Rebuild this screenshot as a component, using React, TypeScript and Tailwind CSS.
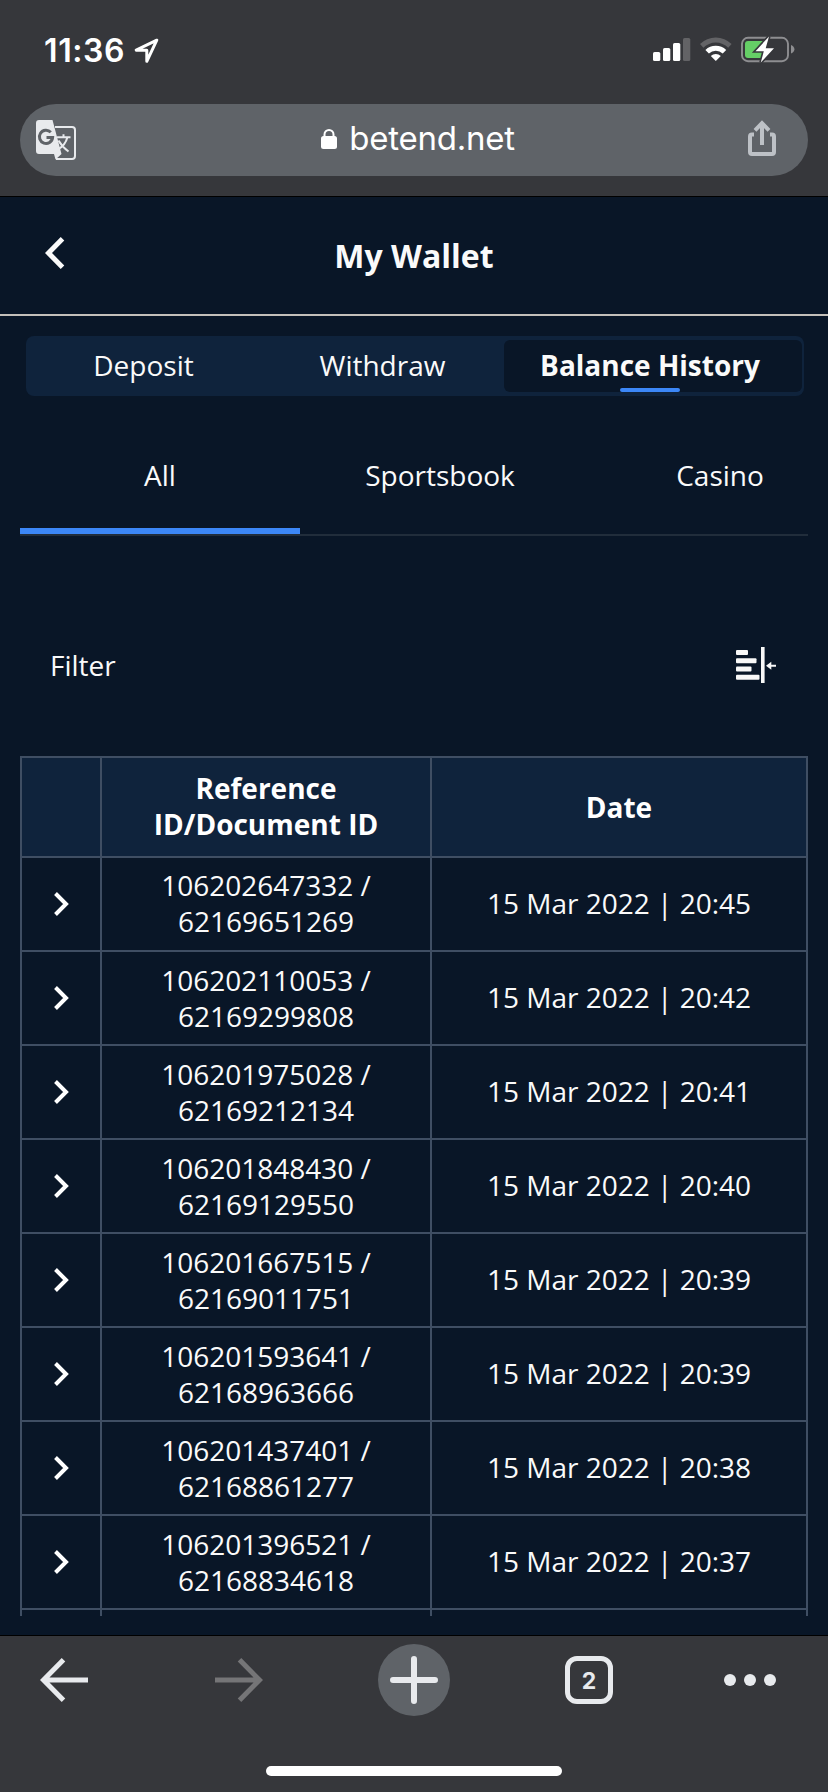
import { useState } from 'react';

interface HistoryRow {
  reference: string;
  document: string;
  date: string;
}

const walletTabs = ['Deposit', 'Withdraw', 'Balance History'];
const categories = ['All', 'Sportsbook', 'Casino'];

const rows: HistoryRow[] = [
  { reference: '106202647332', document: '62169651269', date: '15 Mar 2022 | 20:45' },
  { reference: '106202110053', document: '62169299808', date: '15 Mar 2022 | 20:42' },
  { reference: '106201975028', document: '62169212134', date: '15 Mar 2022 | 20:41' },
  { reference: '106201848430', document: '62169129550', date: '15 Mar 2022 | 20:40' },
  { reference: '106201667515', document: '62169011751', date: '15 Mar 2022 | 20:39' },
  { reference: '106201593641', document: '62168963666', date: '15 Mar 2022 | 20:39' },
  { reference: '106201437401', document: '62168861277', date: '15 Mar 2022 | 20:38' },
  { reference: '106201396521', document: '62168834618', date: '15 Mar 2022 | 20:37' },
];

const StatusBar = () => (
  <div className="flex h-[104px] items-start justify-between pl-[44px] pr-[33px] pt-[36px]">
    <div className="flex items-start gap-[9px]">
      <span className="w-[81px] pt-px whitespace-nowrap font-['Inter',sans-serif] text-[32px] leading-[28px] font-semibold tracking-[0.6px] text-white">
        11:36
      </span>
      <svg width="26" height="28" viewBox="0 0 26 28" className="mt-px" fill="none" stroke="#fff" strokeWidth="3" strokeLinejoin="round">
        <path d="M22.8 3.2 2.2 13.2H12.8V24.3Z" />
      </svg>
    </div>
    <div className="flex items-start">
      <svg width="38" height="26" viewBox="0 0 38 26" className="mt-px" fill="#fff">
        <rect x="0" y="15" width="7.3" height="9" rx="1.6" />
        <rect x="10" y="11" width="7.3" height="13" rx="1.6" />
        <rect x="20" y="6" width="7.3" height="18" rx="1.6" />
        <rect x="30" y="1" width="7.3" height="23" rx="1.6" fill="#636366" />
      </svg>
      <svg width="32" height="26" viewBox="0 0 32 26" className="ml-[9px]" fill="#fff">
        <path d="M0 8.1a22.4 22.4 0 0 1 31.6 0l-3.4 3.6a17.6 17.6 0 0 0-24.8 0Z" fill="#636366" />
        <path d="M5.4 14a15 15 0 0 1 20.8 0l-3.5 3.6a10 10 0 0 0-13.8 0Z" />
        <path d="M10.8 20.1a7.2 7.2 0 0 1 10 0L15.8 25Z" />
      </svg>
      <svg width="54" height="28" viewBox="0 0 54 28" className="ml-[9px]">
        <rect x="1" y="1.8" width="46" height="23.4" rx="6" fill="none" stroke="#8e8e91" strokeWidth="1.9" />
        <path d="M50 9v8.5c2.2-.8 3.4-2.3 3.4-4.2S52.2 9.8 50 9Z" fill="#8e8e91" />
        <path d="M7 5H24V22H7a3 3 0 0 1-3-3V8a3 3 0 0 1 3-3Z" fill="#65ce66" />
        <path
          d="M28 .5 14.5 15.2h8.3L19.8 26.5 33 12.2h-8.3Z"
          fill="#fff"
          stroke="#36373b"
          strokeWidth="3.2"
          paintOrder="stroke"
        />
      </svg>
    </div>
  </div>
);

const TranslateIcon = () => (
  <svg width="40" height="41" viewBox="0 0 40 41">
    <path d="M19 7H36a3 3 0 0 1 3 3V36a3 3 0 0 1-3 3H20" fill="none" stroke="#e8eaed" strokeWidth="2" />
    <path
      d="M21 17.3H34.5M27.5 14.3V17M31.3 17.5C30 23 26 27 22 29.5M22.5 20.5C25 25 28.5 28.5 32.5 31.5"
      fill="none"
      stroke="#e8eaed"
      strokeWidth="2"
    />
    <path d="M3 0H16.5L25.5 34 19.5 39.5 18 34H3a3 3 0 0 1-3-3V3a3 3 0 0 1 3-3Z" fill="#e8eaed" />
    <path d="M14.8 12.3A6.6 6.6 0 1 0 16.6 17.5H10.5" fill="none" stroke="#5f6368" strokeWidth="3" />
  </svg>
);

const AddressBar = () => (
  <div className="mx-5 flex h-[72px] items-center justify-between rounded-full bg-[#5f6368] pl-4 pr-8">
    <button className="w-[40px]">
      <TranslateIcon />
    </button>
    <div className="flex items-center gap-[12px] pl-[12px]">
      <svg width="16" height="20" viewBox="0 0 16 20" className="mb-[2px]">
        <rect y="7" width="16" height="13" rx="2.5" fill="#fff" />
        <path d="M3.5 8.5V5.5a4.5 4.5 0 0 1 9 0V8.5" fill="none" stroke="#fff" strokeWidth="2" />
      </svg>
      <span className="pb-[4px] font-['Inter',sans-serif] text-[33px] leading-[40px] tracking-[-0.25px] text-white">
        betend.net
      </span>
    </div>
    <button className="w-[28px] pb-[5px]">
      <svg width="28" height="36" viewBox="0 0 28 36" fill="none" stroke="#bdc1c6" strokeWidth="4">
        <path d="M6 14.5H4a2 2 0 0 0-2 2V32a2 2 0 0 0 2 2H24a2 2 0 0 0 2-2V16.5a2 2 0 0 0-2-2H22" />
        <path d="M14 25V3.5M7 10.3 14 3.2 21 10.3" />
      </svg>
    </button>
  </div>
);

const BrowserToolbar = () => (
  <div className="h-[157px] border-t border-black bg-[#36373b]">
    <div className="flex h-[88px] items-center justify-between pl-[40px] pr-[52px]">
      <svg width="48" height="44" viewBox="0 0 48 44" fill="none" stroke="#e8eaed" strokeWidth="5">
        <path d="M48 22H4M23.5 1.8 3.5 22 23.5 42.2" />
      </svg>
      <svg width="48" height="44" viewBox="0 0 48 44" className="ml-[32px]" fill="none" stroke="#757577" strokeWidth="5">
        <path d="M0 22H44M24.5 1.8 44.5 22 24.5 42.2" />
      </svg>
      <button className="ml-[20px] flex size-[72px] items-center justify-center rounded-full bg-[#5f6368]">
        <svg width="48" height="48" viewBox="0 0 48 48" stroke="#e8eaed" strokeWidth="6" strokeLinecap="round">
          <path d="M24 3V45M3 24H45" />
        </svg>
      </button>
      <button className="ml-[20px] flex size-[48px] items-center justify-center rounded-[12px] border-[5px] border-[#e8eaed] pt-[2px] font-['Inter',sans-serif] text-[23px] leading-none font-bold text-[#e8eaed]">
        2
      </button>
      <div className="ml-[16px] flex gap-2">
        <span className="size-3 rounded-full bg-[#e8eaed]" />
        <span className="size-3 rounded-full bg-[#e8eaed]" />
        <span className="size-3 rounded-full bg-[#e8eaed]" />
      </div>
    </div>
    {/* home indicator */}
    <div className="mx-auto mt-[42px] h-[10px] w-[296px] rounded-full bg-white" />
  </div>
);

const FilterIcon = () => (
  <svg width="40" height="36" viewBox="0 0 40 36" fill="#f8f8f8">
    <rect x="0" y="3" width="12" height="5" rx="1" />
    <rect x="0" y="11.3" width="20.5" height="5" rx="1" />
    <rect x="0" y="19.5" width="15.5" height="5" rx="1" />
    <rect x="0" y="27.7" width="23.5" height="5" rx="1" />
    <rect x="25" width="3.6" height="36" />
    <path d="M30 18.7 35.3 14.8V17.8H40V19.7H35.3V22.7Z" />
  </svg>
);

const App: React.FC = () => {
  const [activeTab, setActiveTab] = useState('Balance History');
  const [category, setCategory] = useState('All');

  return (
    <div className="flex h-[1792px] w-[828px] flex-col overflow-hidden bg-[#091627] font-['Open_Sans','Noto_Sans',sans-serif] text-[28px] text-[#fafafa]">
      <div className="h-[197px] shrink-0 border-b border-black bg-[#36373b]">
        <StatusBar />
        <AddressBar />
      </div>

      <header className="grid h-[119px] shrink-0 grid-cols-[100px_1fr_100px] items-center border-b-2 border-[#c4c0ba]">
        <button className="pb-[5px] pl-[45px]">
          <svg width="20" height="32" viewBox="0 0 20 32" fill="none" stroke="#fafafa" strokeWidth="5">
            <path d="M17.5 1.8 3.5 16 17.5 30.2" />
          </svg>
        </button>
        <h1 className="text-center text-[32px] leading-[40px] font-bold">My Wallet</h1>
      </header>

      <main className="flex min-h-0 flex-1 flex-col px-5">
        <nav className="mx-[6px] mt-5 mr-1 grid h-[60px] shrink-0 grid-cols-[237px_237px_298px] gap-x-[2px] rounded-[8px] bg-[#0f233c] py-1">
          {walletTabs.map((tab) => (
            <button
              key={tab}
              onClick={() => setActiveTab(tab)}
              className={
                activeTab === tab
                  ? 'relative rounded-[6px] bg-[#091627] pr-[6px] pb-[2px] leading-[50px] font-bold whitespace-nowrap'
                  : 'pr-[2px] pb-[2px] leading-[50px]'
              }
            >
              {tab}
              {activeTab === tab && (
                <span className="absolute bottom-0 left-[116px] h-1 w-[60px] rounded-[2px] bg-[#3c87f7]" />
              )}
            </button>
          ))}
        </nav>

        <div className="mt-[24px] flex h-[116px] shrink-0 overflow-hidden border-b-2 border-[#212d3b]">
          {categories.map((item) => (
            <button
              key={item}
              onClick={() => setCategory(item)}
              className={
                category === item
                  ? 'w-[280px] shrink-0 border-b-[6px] border-[#3c87f7] pt-[2px]'
                  : 'w-[280px] shrink-0 border-b-[6px] border-transparent pt-[2px]'
              }
            >
              {item}
            </button>
          ))}
        </div>

        <div className="mt-[93px] flex h-[72px] shrink-0 items-center justify-between pr-[32px] pl-[30px]">
          <span>Filter</span>
          <button>
            <FilterIcon />
          </button>
        </div>

        <div className="mt-[55px] mb-[19px] min-h-0 flex-1 overflow-hidden">
          <table className="w-full table-fixed border-separate border-spacing-0 border-t-2 border-l-2 border-[#3f4e63] text-center leading-[36px]">
            <colgroup>
              <col className="w-[80px]" />
              <col className="w-[330px]" />
              <col />
            </colgroup>
            <thead>
              <tr className="h-[100px] bg-[#0f233c] text-white">
                <th className="border-r-2 border-b-2 border-[#3f4e63]" />
                <th className="border-r-2 border-b-2 border-[#3f4e63] px-10 pb-[2px] font-bold">
                  Reference ID/Document ID
                </th>
                <th className="border-r-2 border-b-2 border-[#3f4e63] pb-px font-bold">Date</th>
              </tr>
            </thead>
            <tbody>
              {rows.map((row) => (
                <tr key={row.reference} className="group h-[94px]">
                  <td className="border-r-2 border-b-2 border-[#3f4e63]">
                    <svg width="15" height="24" viewBox="0 0 15 24" className="mx-auto" fill="none" stroke="#fff" strokeWidth="4">
                      <path d="M1.5 1.5 12 12 1.5 22.5" />
                    </svg>
                  </td>
                  <td className="border-r-2 border-b-2 border-[#3f4e63] px-10 group-first:pb-[2px]">
                    {row.reference} /<br />
                    {row.document}
                  </td>
                  <td className="border-r-2 border-b-2 border-[#3f4e63] pb-[2px]">{row.date}</td>
                </tr>
              ))}
              {/* next row, cut off by the toolbar */}
              <tr className="h-[94px]">
                <td className="border-r-2 border-[#3f4e63]" />
                <td className="border-r-2 border-[#3f4e63]" />
                <td className="border-r-2 border-[#3f4e63]" />
              </tr>
            </tbody>
          </table>
        </div>
      </main>

      <BrowserToolbar />
    </div>
  );
};

export default App;
